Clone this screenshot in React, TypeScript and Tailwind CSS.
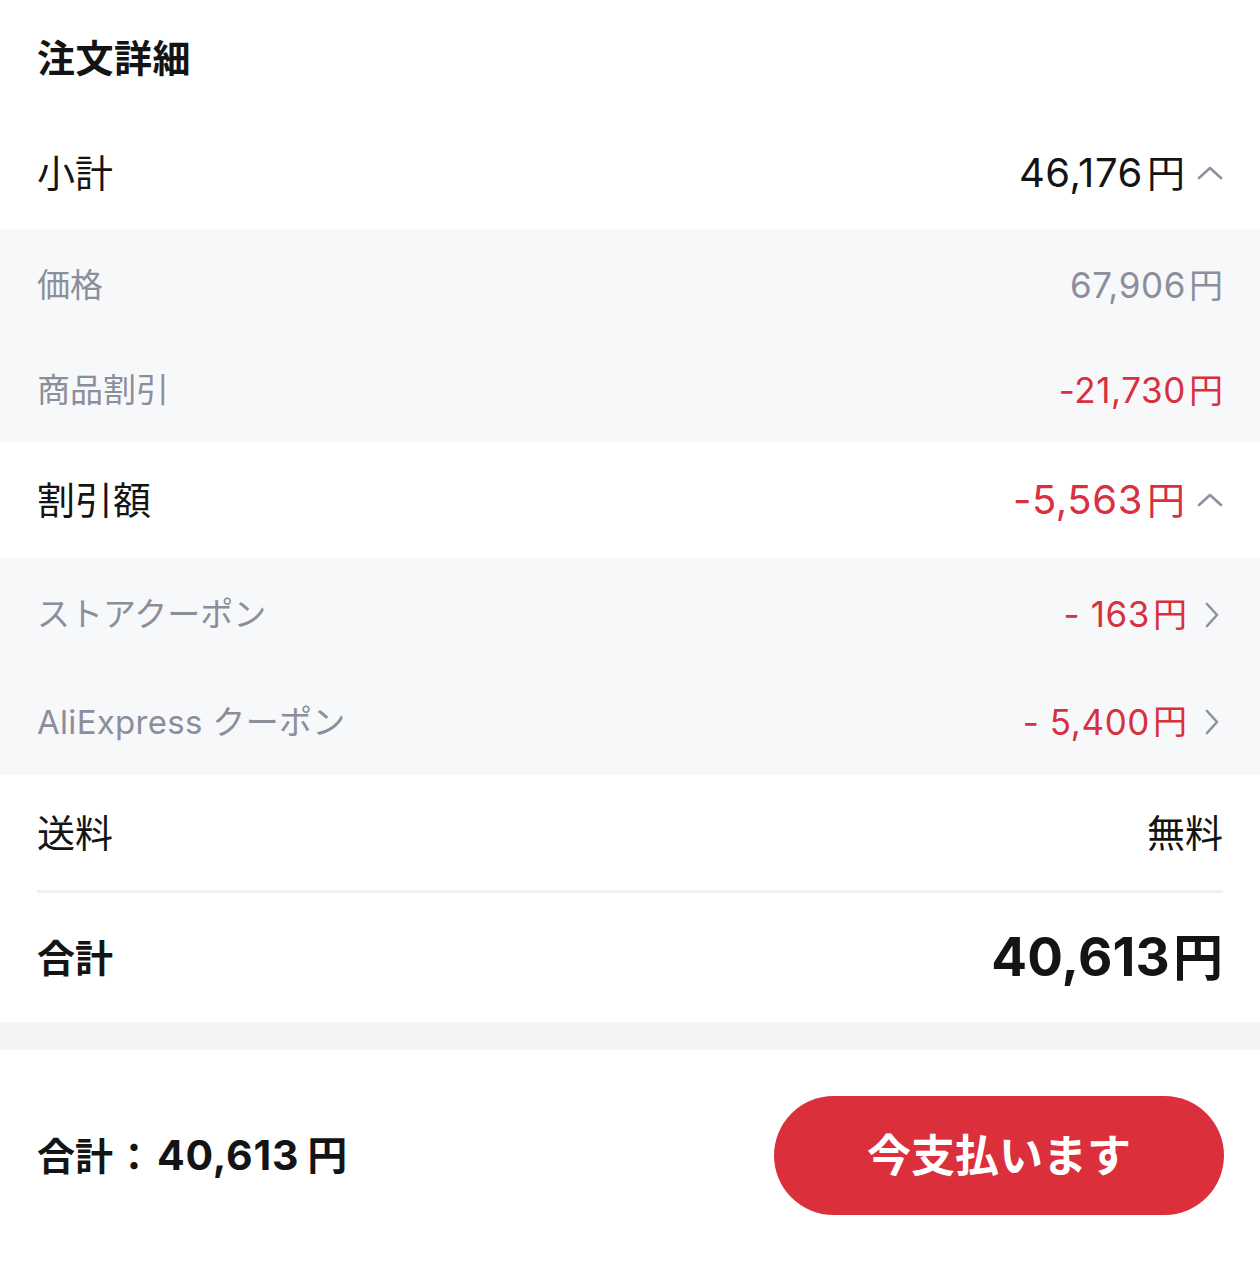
import React from "react";

const font = "font-['Inter','Noto_Sans_CJK_JP',sans-serif]";

function ChevronUp() {
  return (
    <svg width="26" height="14" viewBox="0 0 26 14" className="ml-[12px] shrink-0">
      <polyline points="2,12 13,2 24,12" fill="none" stroke="#8e909c" strokeWidth="2.6" strokeLinecap="round" strokeLinejoin="round" />
    </svg>
  );
}

function ChevronRight() {
  return (
    <svg width="14" height="26" viewBox="0 0 14 26" className="ml-[18px] mr-[4px] shrink-0">
      <polyline points="2,2 12,13 2,24" fill="none" stroke="#8e909c" strokeWidth="2.6" strokeLinecap="round" strokeLinejoin="round" />
    </svg>
  );
}

export default function App() {
  return (
    <div className={`${font} w-[1260px] min-h-[1279px] bg-white text-[#141414] antialiased`}>
      {/* Heading */}
      <div className="h-[116px] flex items-center px-[37px]">
        <h1 className="text-[38px] font-bold leading-none tracking-[0.5px]">注文詳細</h1>
      </div>

      {/* Subtotal */}
      <div className="h-[113px] flex items-center justify-between px-[37px]">
        <span className="text-[38px] leading-none">小計</span>
        <div className="flex items-center">
          <span className="text-[40px] leading-none tracking-[0.6px]">46,176</span>
          <span className="text-[38px] leading-none ml-[4px]">円</span>
          <ChevronUp />
        </div>
      </div>

      {/* Subtotal detail */}
      <div className="bg-[#f7f8fa] pt-[3px]">
        <div className="h-[107px] flex items-center justify-between px-[37px] text-[#8c8e9b]">
          <span className="text-[33px] leading-none">価格</span>
          <div className="flex items-center">
            <span className="text-[35px] leading-none tracking-[0.6px]">67,906</span>
            <span className="text-[34px] leading-none ml-[3px]">円</span>
          </div>
        </div>
        <div className="h-[103px] flex items-center justify-between px-[37px]">
          <span className="text-[33px] leading-none text-[#8c8e9b]">商品割引</span>
          <div className="flex items-center text-[#d8303e]">
            <span className="text-[35px] leading-none tracking-[0.6px]">-21,730</span>
            <span className="text-[34px] leading-none ml-[3px]">円</span>
          </div>
        </div>
      </div>

      {/* Discount */}
      <div className="h-[116px] flex items-center justify-between px-[37px]">
        <span className="text-[38px] leading-none">割引額</span>
        <div className="flex items-center text-[#d8303e]">
          <span className="text-[40px] leading-none tracking-[0.6px]">-5,563</span>
          <span className="text-[38px] leading-none ml-[4px]">円</span>
          <ChevronUp />
        </div>
      </div>

      {/* Discount detail */}
      <div className="bg-[#f7f8fa] pt-[2px]">
        <div className="h-[109px] flex items-center justify-between px-[37px]">
          <span className="text-[33px] leading-none text-[#8c8e9b]">ストアクーポン</span>
          <div className="flex items-center text-[#d8303e]">
            <span className="text-[35px] leading-none tracking-[0.6px]">- 163</span>
            <span className="text-[34px] leading-none ml-[3px]">円</span>
            <ChevronRight />
          </div>
        </div>
        <div className="h-[106px] flex items-center justify-between px-[37px]">
          <span className="text-[33px] leading-none text-[#8c8e9b] tracking-[0.3px]">AliExpress クーポン</span>
          <div className="flex items-center text-[#d8303e]">
            <span className="text-[35px] leading-none tracking-[0.6px]">- 5,400</span>
            <span className="text-[34px] leading-none ml-[3px]">円</span>
            <ChevronRight />
          </div>
        </div>
      </div>

      {/* Shipping */}
      <div className="px-[37px]">
        <div className="h-[115px] flex items-center justify-between">
          <span className="text-[38px] leading-none">送料</span>
          <span className="text-[38px] leading-none">無料</span>
        </div>
        <div className="h-[3px] bg-[#f0f0f2]" />
        <div className="h-[129px] flex items-center justify-between">
          <span className="text-[38px] font-bold leading-none">合計</span>
          <div className="flex items-center">
            <span className="text-[53px] font-bold leading-none tracking-[0.2px]">40,613</span>
            <span className="text-[50px] font-bold leading-none ml-[3px]">円</span>
          </div>
        </div>
      </div>

      {/* Separator band */}
      <div className="h-[28px] bg-[#f4f4f5]" />

      {/* Bottom bar */}
      <div className="flex items-start justify-between pl-[37px] pr-[36px] pt-[46px] pb-[64px]">
        <div className="h-[119px] flex items-center">
          <span className="text-[38px] font-bold leading-none">合計</span>
          <span className="text-[38px] font-bold leading-none ml-[2px]">：</span>
          <span className="text-[41px] font-bold leading-none tracking-[0.8px] ml-[4px]">40,613</span>
          <span className="text-[40px] font-bold leading-none ml-[8px]">円</span>
        </div>
        <button className="w-[450px] h-[119px] rounded-full bg-[#dc2f3c] text-white text-[44px] font-bold leading-none flex items-center justify-center">
          今支払います
        </button>
      </div>
    </div>
  );
}
